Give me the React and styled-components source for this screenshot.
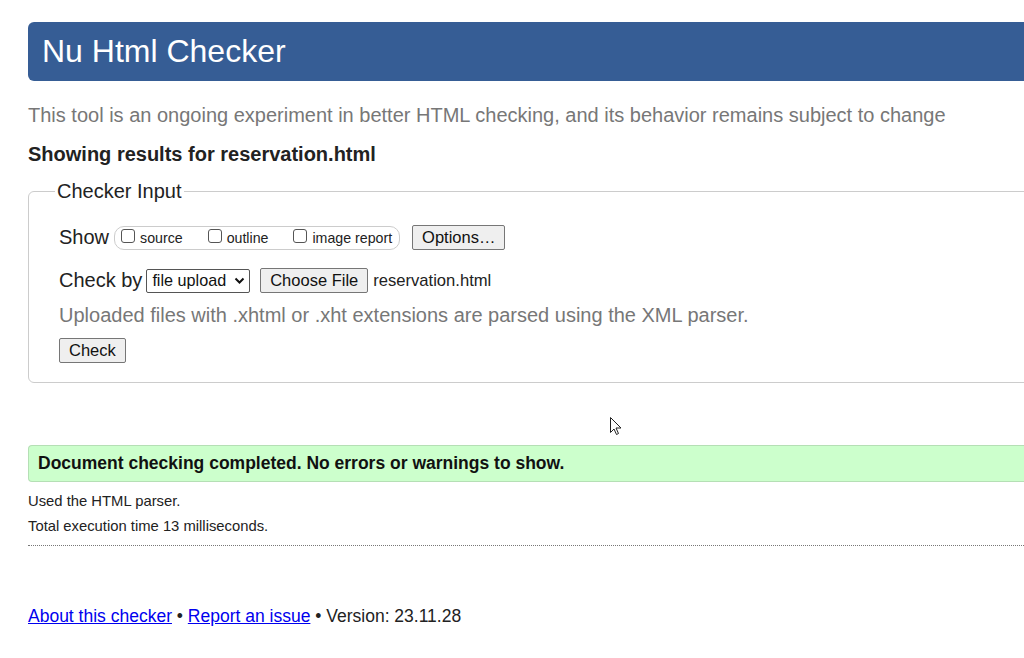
import React from 'react';
import styled, { createGlobalStyle } from 'styled-components';

const GlobalStyle = createGlobalStyle`
  html, body {
    margin: 0;
    padding: 0;
    background: #fff;
    overflow: hidden;
  }
  body {
    font-family: "Liberation Sans", Arial, sans-serif;
    color: #111;
  }
`;

const Page = styled.div`
  position: relative;
  width: 1140px;
  padding: 22px 0 40px 28px;
`;

const Header = styled.h1`
  margin: 0;
  height: 59px;
  display: flex;
  align-items: center;
  padding-left: 14px;
  background: #365d95;
  color: #fff;
  font-size: 32px;
  font-weight: normal;
  border-radius: 6px 0 0 6px;
`;

const Intro = styled.p`
  margin: 23px 0 0;
  font-size: 20px;
  color: #777;
`;

const Results = styled.h2`
  margin: 16px 0 0;
  font-size: 20px;
  font-weight: bold;
  color: #222;
`;

const Fieldset = styled.fieldset`
  margin: 14px 0 0;
  padding: 8px 30px 19px;
  border: 1px solid #ccc;
  border-radius: 6px 0 0 6px;
`;

const Legend = styled.legend`
  font-size: 20px;
  color: #222;
  padding: 0 2px;
  margin-left: -4px;
`;

const Row = styled.div`
  display: flex;
  align-items: center;
  margin-top: ${p => p.$top || 0}px;
`;

const Label = styled.span`
  font-size: 20px;
  color: #222;
  margin-right: ${p => p.$gap || 5}px;
`;

const Pill = styled.div`
  display: flex;
  align-items: center;
  height: 22px;
  padding: 0 7px 0 6px;
  border: 1px solid #ccc;
  border-radius: 10px;
  margin-right: 12px;
`;

const CheckItem = styled.label`
  display: flex;
  align-items: center;
  font-size: 14.2px;
  color: #222;
  margin-right: ${p => p.$gap || 0}px;
  margin-top: 1px;
`;

const Box = styled.span`
  display: inline-block;
  width: 12px;
  height: 12px;
  border: 1px solid #555;
  border-radius: 3px;
  margin-right: 5px;
  margin-top: -4px;
`;

const Button = styled.button`
  font-family: "Liberation Sans", Arial, sans-serif;
  font-size: 16.5px;
  color: #111;
  background: #efefef;
  border: 1px solid #767676;
  border-radius: 2px;
  height: 25px;
  padding: 0 ${p => p.$pad || 9}px;
`;

const Select = styled.div`
  display: flex;
  align-items: center;
  height: 22px;
  padding: 0 4px 0 5px;
  border: 1px solid #555;
  border-radius: 2px;
  font-size: 16.2px;
  color: #111;
  margin-right: 10px;
  gap: 8px;
`;

const FileName = styled.span`
  font-size: 16.6px;
  color: #222;
  margin-left: 5px;
`;

const Hint = styled.p`
  margin: 11px 0 0;
  font-size: 20px;
  color: #777;
`;

const Success = styled.div`
  margin-top: 62px;
  height: 35px;
  display: flex;
  align-items: center;
  padding-left: 9px;
  background: #ccffcc;
  border: 1px solid #b5dfb5;
  border-right: none;
  border-radius: 4px 0 0 4px;
  font-size: 17.5px;
  font-weight: bold;
  color: #111;
`;

const Note = styled.p`
  margin: ${p => p.$top || 0}px 0 0;
  font-size: 14.8px;
  color: #222;
`;

const Divider = styled.hr`
  margin: 11px 0 0;
  border: none;
  border-top: 1px dotted #777;
`;

const Footer = styled.p`
  margin: 60px 0 0;
  font-size: 17.5px;
  color: #222;

  a {
    color: #0000ee;
    text-decoration: underline;
  }
`;

const Cursor = styled.svg`
  position: absolute;
  left: 610px;
  top: 417px;
`;

const Chevron = () => (
  <svg width="11" height="8" viewBox="0 0 11 8">
    <path d="M1.5 1.5 L5.5 5.5 L9.5 1.5" fill="none" stroke="#111" strokeWidth="2" />
  </svg>
);

export default function App() {
  return (
    <>
      <GlobalStyle />
      <Page>
        <Header>Nu Html Checker</Header>
        <Intro>This tool is an ongoing experiment in better HTML checking, and its behavior remains subject to change</Intro>
        <Results>Showing results for reservation.html</Results>
        <Fieldset>
          <Legend>Checker Input</Legend>
          <Row $top={14}>
            <Label>Show</Label>
            <Pill>
              <CheckItem $gap={25}><Box />source</CheckItem>
              <CheckItem $gap={25}><Box />outline</CheckItem>
              <CheckItem><Box />image report</CheckItem>
            </Pill>
            <Button>Options…</Button>
          </Row>
          <Row $top={18}>
            <Label $gap={4}>Check by</Label>
            <Select>file upload <Chevron /></Select>
            <Button>Choose File</Button>
            <FileName>reservation.html</FileName>
          </Row>
          <Hint>Uploaded files with .xhtml or .xht extensions are parsed using the XML parser.</Hint>
          <Row $top={11}>
            <Button $pad={9}>Check</Button>
          </Row>
        </Fieldset>
        <Success>Document checking completed. No errors or warnings to show.</Success>
        <Note $top={11}>Used the HTML parser.</Note>
        <Note $top={9}>Total execution time 13 milliseconds.</Note>
        <Divider />
        <Footer>
          <a href="#">About this checker</a> • <a href="#">Report an issue</a> • Version: 23.11.28
        </Footer>
        <Cursor width="12" height="19" viewBox="0 0 12 19">
          <path d="M0.5 0.5 L0.5 15.5 L4 12 L6.5 17.5 L8.5 16.5 L6 11 L11 11 Z" fill="#fff" stroke="#222" strokeWidth="1" />
        </Cursor>
      </Page>
    </>
  );
}
